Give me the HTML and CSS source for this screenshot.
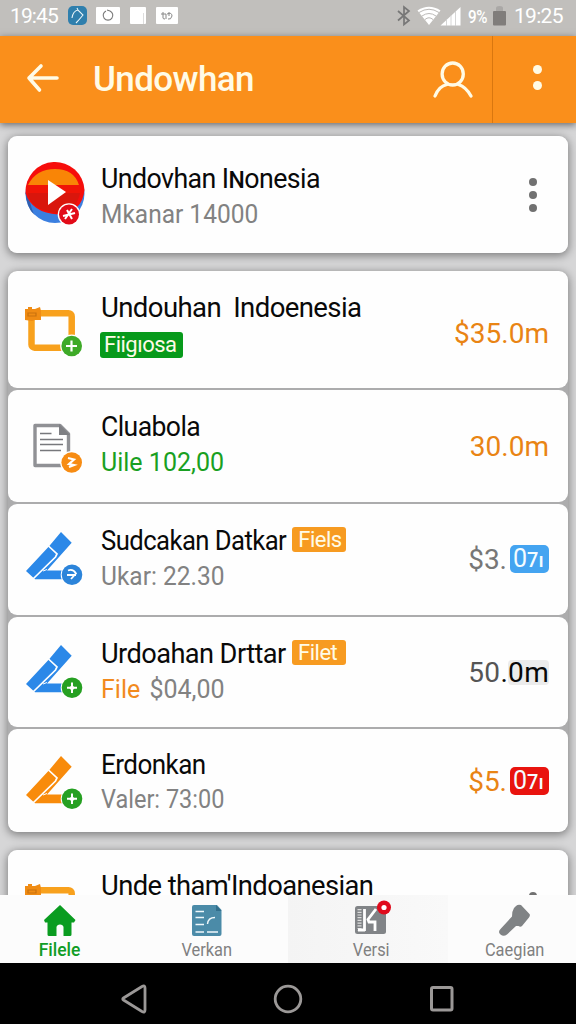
FILE: index.html
```html
<!DOCTYPE html>
<html lang="id">
<head>
<meta charset="utf-8">
<title>Undowhan</title>
<link rel="stylesheet" href="styles.css">
</head>
<body>
<svg class="defs" aria-hidden="true">
  <symbol id="pen" viewBox="0 0 62 60">
    <path d="M37 3 47.700 13.700 23 41.500H40V50.300H11L2 42 25.300 17Z" fill="currentColor"/>
    <path d="M24.500 17 33 25 31.500 28 9 50" fill="none" stroke="#fff" stroke-width="1.700"/>
    <path d="M23 40.500 19 42" fill="none" stroke="#fff" stroke-width="1"/>
  </symbol>
  <symbol id="clip" viewBox="0 0 62 60">
    <path d="M7.500 12.200H44.500a3.200 3.200 0 0 1 3.200 3.200V46.700H10.500a3 3 0 0 1-3-3Z" fill="none" stroke="#f8a11d" stroke-width="6.500"/>
    <path d="M1 8H4V6H8V8H11L16 6 17 10V19H11L8 20 1 19Z" fill="#f08c14"/>
    <path d="M4 12H12V15H4Z" fill="none" stroke="#c9720e" stroke-width="1.200"/>
  </symbol>
</svg>
<div class="screen">
  <header class="status">
    <span class="clock">19:45</span>
    <svg class="status-apps" width="120" height="20" viewBox="0 0 120 20">
      <rect x="0" y="0" width="19" height="19" rx="5" fill="#2f7fad"/>
      <path d="M4 12Q5 5 10 4L15 9Q11 14 8 17M10 4 9 2" fill="none" stroke="#e9f5fa" stroke-width="1.1"/>
      <rect x="28" y="1" width="24" height="17" rx="1" fill="#fff"/>
      <path d="M38 5a4.800 4.800 0 1 0 4 0L39 4" fill="none" stroke="#777" stroke-width="1.1"/>
      <rect x="62" y="1" width="16" height="17" rx="1" fill="#fff"/>
      <path d="M75.500 7V18" stroke="#ddd"/>
      <rect x="88" y="1" width="22" height="17" rx="1" fill="#fff"/>
      <path d="M93 8h5M95 6v6q0 1 2 1M98 8v5M99 8q5-2 5 2-1 4-4 3M101 6v4" fill="none" stroke="#888" stroke-width="1"/>
    </svg>
    <svg class="status-signal" width="64" height="22" viewBox="0 0 64 22">
      <path d="M1 6 12 15.500 7 19.500V2L12 6 1 15.500" fill="none" stroke="#777" stroke-width="1.7"/>
      <path d="M32 20 20.500 5.500Q32-2 43.500 5.500Z" fill="#fff"/>
      <path d="M22 7.500Q32 1 42 7.500M25 11Q32 6 39 11M28 14.500Q32 11 36 14.500" fill="none" stroke="#bbb9b7" stroke-width="1"/>
      <path d="M43.500 20.500 63.500 2V20.500Z" fill="#fff"/>
      <path d="M49.500 14V21M54 10V21M58.500 6V21" stroke="#ccc" stroke-width=".8"/>
    </svg>
    <span class="percent">9%</span>
    <svg class="battery" width="13" height="20" viewBox="0 0 13 20"><path d="M3 5V2Q3 0 6.500 0T10 2V5Z" fill="#aaa8a6"/><rect y="5" width="13" height="14.500" rx="1" fill="#807d7b"/></svg>
    <span class="clock">19:25</span>
  </header>

  <div class="appbar">
    <svg class="back" width="34" height="30" viewBox="0 0 34 30"><path d="M15 3 3 15 13.500 27M3 15H31" fill="none" stroke="#fffbe6" stroke-width="3.600" stroke-linecap="round" stroke-linejoin="round"/></svg>
    <h1>Undowhan</h1>
    <svg class="user" width="42" height="40" viewBox="0 0 42 40"><g fill="none" stroke="#fffbe6" stroke-width="3.300" stroke-linecap="round"><ellipse cx="20.700" cy="14" rx="10.600" ry="11"/><path d="M3 36Q7 26 15 24.500M26.500 24.500Q34 27 39 36"/></g></svg>
    <div class="more-bar"><i></i><i></i></div>
  </div>

  <main>
    <section class="card">
      <article class="row first">
        <svg class="icon" width="62" height="68" viewBox="0 0 62 68">
          <circle cx="31" cy="33.500" r="29.500" fill="#3b7fe0"/>
          <path d="M1.500 33Q3 48 10 54.500 4 40 5 30Z" fill="#315fae"/>
          <path d="M1.500 33A29.500 29.500 0 0 1 60.500 30Q58 53 34 54.500 8 53 1.500 33Z" fill="#f60d0b"/>
          <path d="M4 25H57Q56 52 32 53 5 50 3 30Z" fill="#d9160c"/>
          <path d="M4 25Q12 9 31 9T55 25Z" fill="#f98506"/>
          <path d="M3 25H57V33H3Z" fill="#f01407"/>
          <path d="M24 20 42 32 24 45Z" fill="#fff"/>
          <circle cx="45" cy="54.500" r="11.300" fill="#fff"/><circle cx="45" cy="54.500" r="10" fill="#e20b18"/>
          <path d="M39 56 51 53M43 50 48 59M48 49 41 59" stroke="#fff" stroke-width="2"/>
        </svg>
        <div class="text"><h2><span class="t1">Undovhan I<small>N</small>onesia</span></h2><p><span class="s1">Mkanar 14000</span></p></div>
        <div class="more"><i></i><i></i><i></i></div>
      </article>
    </section>

    <section class="card group">
      <article class="row r2">
        <svg class="icon" width="62" height="60" viewBox="0 0 62 60"><use href="#clip"/><circle cx="47.700" cy="45" r="11.500" fill="#fff"/><circle cx="47.700" cy="45" r="10.300" fill="#3eaa28"/><path d="M47.500 39.500V50.500M42 45H53" stroke="#fff" stroke-width="2.200"/></svg>
        <div class="text"><h2><span class="t2">Undouhan Indoenesia</span></h2><div class="tag green">Fiigıosa</div></div>
        <div class="price orange">$35.0m</div>
      </article>
      <article class="row r3">
        <svg class="icon" width="62" height="60" viewBox="0 0 62 60"><path d="M11 10.500H36L44.500 19V50.500H11Z" fill="#fff" stroke="#909195" stroke-width="3.400" stroke-linejoin="round"/><path d="M35 9 46 20H35Z" fill="#7f8084"/><path d="M16 18.500H27.500M16 24.500H39M16 29.500H39M16 35.500H37" stroke="#77787c" stroke-width="1.500"/><circle cx="47.700" cy="47.500" r="11.500" fill="#fff"/><circle cx="47.700" cy="47.500" r="10.300" fill="#f78c13"/><path d="M44 43 50 44.500 45 49 50 50 45 52" fill="none" stroke="#fff" stroke-width="2.200"/></svg>
        <div class="text"><h2><span class="t3">Cluabola</span></h2><p class="leaf"><span class="s3">Uile 102,00</span></p></div>
        <div class="price orange">30.0m</div>
      </article>
      <article class="row r4">
        <svg class="icon blue" width="62" height="60" viewBox="0 0 62 60"><use href="#pen"/><circle cx="48" cy="45.700" r="11.300" fill="#fff"/><circle cx="48" cy="45.700" r="10.300" fill="#2c84da"/><path d="M44 41.500Q49 39.500 52 44.500L47 50M43 46H52" fill="none" stroke="#fff" stroke-width="1.800"/></svg>
        <div class="text"><h2><span class="t4">Sudcakan Datkar</span><span class="tag amber">Fiels</span></h2><p><span class="s4">Ukar: 22.30</span></p></div>
        <div class="price grey">$3.<b class="chip sky">0<small>7ı</small></b></div>
      </article>
      <article class="row r5">
        <svg class="icon blue" width="62" height="60" viewBox="0 0 62 60"><use href="#pen"/><circle cx="48" cy="45.700" r="11.300" fill="#fff"/><circle cx="48" cy="45.700" r="10.300" fill="#26a022"/><path d="M48 40.500V51M43 45.700H53" stroke="#fff" stroke-width="2"/><path d="M48 43 51 45.700 48 49 45 45.700Z" fill="#fff"/></svg>
        <div class="text"><h2><span class="t5">Urdoahan Drttar</span><span class="tag amber">Filet</span></h2><p><span class="s5"><em>File</em> $04,00</span></p></div>
        <div class="price dark">50<b class="hl">.<span>0m</span></b></div>
      </article>
      <article class="row r6">
        <svg class="icon tangerine" width="62" height="60" viewBox="0 0 62 60"><use href="#pen"/><circle cx="48" cy="45.700" r="11.300" fill="#fff"/><circle cx="48" cy="45.700" r="10.300" fill="#26a022"/><path d="M48 40.500V51M43 45.700H53" stroke="#fff" stroke-width="2"/><path d="M48 43 51 45.700 48 49 45 45.700Z" fill="#fff"/></svg>
        <div class="text"><h2><span class="t6">Erdonkan</span></h2><p><span class="s6">Valer: 73:00</span></p></div>
        <div class="price orange">$5.<b class="chip red">0<small>7ı</small></b></div>
      </article>
    </section>

    <section class="card">
      <article class="row r7">
        <svg class="icon" width="62" height="60" viewBox="0 0 62 60"><use href="#clip"/></svg>
        <div class="text"><h2><span class="t7">Unde tham'Indoanesian</span></h2></div>
        <div class="more"><i></i><i></i><i></i></div>
      </article>
    </section>
  </main>

  <nav class="tabs">
    <a class="active"><svg width="34" height="34" viewBox="0 0 34 34"><path d="M17 1 32.500 16 31 18.500H28.500V30.500Q28.500 32 27 32H20.500V23Q20 20.500 17 20.500T13.500 23V32H6Q4.500 32 4.500 30.500V18.500H2L1 16Z" fill="#0a9c20"/></svg><span>Filele</span></a>
    <a><svg width="34" height="34" viewBox="0 0 34 34"><path d="M4 1H27L31.500 6V30a2 2 0 0 1-2 2H4a2 2 0 0 1-2-2V3a2 2 0 0 1 2-2Z" fill="#4b8ba8"/><path d="M26 1 31.500 7H26Z" fill="#326f8c"/><path d="M5.500 7.500H14M5.500 13.500H14M5.500 20.500H14M5.500 28H14M17 28H28" stroke="#eff8fb" stroke-width="1.700"/><path d="M17.500 20Q18 13.500 25 13.500" fill="none" stroke="#eff8fb" stroke-width="1.400"/></svg><span>Verkan</span></a>
    <a class="shade"><svg width="40" height="36" viewBox="0 0 40 36"><rect x="4" y="6" width="31" height="28" rx="2.500" fill="#818487"/><path d="M8.500 9V31" stroke="#ddd" stroke-width="4" stroke-dasharray="1.200 1.500"/><path d="M13.500 9V31M7 30H14M25 9 17 19.500 18 22H24V31" fill="none" stroke="#fff" stroke-width="2.800"/><circle cx="33" cy="7.500" r="7" fill="#e00b1c"/><circle cx="33" cy="7.500" r="2.600" fill="#fff"/></svg><span>Versi</span></a>
    <a class="last"><svg width="34" height="34" viewBox="0 0 34 34"><path d="M18 2Q20 0 23 1L31.500 10Q32.500 11.500 31 13.500L24 22Q22.500 23.500 20.500 22L18 22 9 30.500Q5.500 33 2.500 30.500T2.500 25L14 12.500Q14 7 16 4Z" fill="#808385"/></svg><span>Caegian</span></a>
  </nav>

  <footer class="system">
    <svg width="26" height="30" viewBox="0 0 26 30"><path d="M21 2.500Q24 1 24 4V26Q24 29 21 27.500L2.500 16Q1 15 2.500 14Z" fill="none" stroke="#9b9897" stroke-width="2.800"/></svg>
    <svg width="30" height="30" viewBox="0 0 30 30"><circle cx="15" cy="15" r="12.800" fill="none" stroke="#9b9897" stroke-width="2.800"/></svg>
    <svg width="26" height="28" viewBox="0 0 26 28"><rect x="2.500" y="2.500" width="20.500" height="22.500" rx="1.500" fill="none" stroke="#9b9897" stroke-width="3"/></svg>
  </footer>
</div>
</body>
</html>
```
FILE: styles.css
```css
* { box-sizing: border-box; }
body { margin: 0; font-family: Roboto, "Liberation Sans", sans-serif; color: #090909; background: #d6d6d7; }
h1, h2, p { margin: 0; font-weight: 400; white-space: nowrap; }
svg { display: block; flex: none; }
.defs { display: none; }
.screen { height: 1024px; width: 576px; display: flex; flex-direction: column; overflow: hidden; }

.status { height: 36px; flex: none; display: flex; align-items: center; padding: 0 13px 4px 10px; background: #c1bfbc; color: #fff; }
.clock { font-size: 21px; letter-spacing: -.9px; width: 47px; white-space: nowrap; }
.status-apps { margin-left: 11px; }
.status-signal { margin-left: auto; }
.percent { font-size: 19px; letter-spacing: -.6px; transform: scaleX(.8); transform-origin: left; font-weight: 500; margin-left: 7px; width: 23px; white-space: nowrap; }
.battery { margin: 0 8px 0 2px; }
.battery + .clock { width: 49px; letter-spacing: -.7px; }

.appbar { height: 87px; flex: none; display: flex; align-items: center; background: #fa8f1b; padding-left: 26px; box-shadow: 0 2px 7px rgba(0,0,0,.5); color: #fffbe6; z-index: 1; }
.appbar h1 { font-size: 35px; font-weight: 500; letter-spacing: -.6px; margin-left: 33px; padding-bottom: 1px; }
.back { margin-bottom: 3px; }
.user { margin-left: auto; margin-right: 18px; }
.more-bar { width: 84px; height: 87px; border-left: 1px solid #d9770f; display: flex; flex-direction: column; align-items: center; justify-content: center; gap: 7px; padding: 0 0 4px 5px; }
.more-bar i { width: 9px; height: 9px; border-radius: 50%; background: #fffbe6; }

main { height: 772px; flex: none; overflow: hidden; padding: 13px 8px 0; display: flex; flex-direction: column; gap: 17.500px; }
.card { flex: none; border-radius: 9px; box-shadow: 0 2px 9px 1px rgba(0,0,0,.4); }
.group { display: flex; flex-direction: column; gap: 2px; background: #acacad; }
.row { display: flex; background: #fefefe; border-radius: 9px; padding-left: 16px; padding-right: 19px; }
.first { height: 117px; }
.r2 { height: 117px; }
.r3 { height: 112.500px; }
.r4 { height: 111px; }
.r5 { height: 110px; }
.r6 { height: 103px; }
.r7 { height: 117px; }
.icon { margin-top: 25px; }
.first .icon { margin-top: 24px; }
.r2 .icon { margin-top: 30px; }
.r6 .icon { margin-top: 24px; }
.r7 .icon { margin-top: 28px; }
.blue { color: #2b88e8; }
.tangerine { color: #f88b0b; }
.text { flex: 1; margin-left: 14px; padding-top: 19px; }
.first .text { padding-top: 25px; }
.r6 .text { padding-top: 18px; }
.r7 .text { padding-top: 18px; }
h2 { font-size: 28px; line-height: 36px; letter-spacing: -.6px; display: flex; align-items: center; }
h2 small { font-size: 24px; font-weight: 500; }
p { font-size: 25px; line-height: 36px; color: #828282; }
.first p { margin-top: -1px; }
.r6 p { margin-top: -1px; }

/* each line is condensed slightly from its left edge */
.text span { display: inline-block; transform-origin: left; }
h2 > span:first-child, p > span { margin-left: 1px; }
.t1 { transform: scaleX(.956); }
.t2 { word-spacing: 6px; transform: scaleX(.983); }
.t3 { transform: scaleX(.948); }
.t4 { transform: scaleX(.916); margin-right: -18px; }
.t5 { transform: scaleX(.972); margin-right: -6px; }
.t6 { transform: scaleX(.93); }
.t7 { transform: scaleX(.977); }
.s1 { transform: scaleX(.98); }
.s4 { transform: scaleX(.98); }
.s5 { word-spacing: 3px; }
.s6 { transform: scaleX(.94); }
.leaf { color: #19a022; }
p em { font-style: normal; color: #f28a1d; }
.tag { border-radius: 3px; color: #fffbe8; font-size: 22px; line-height: 26px; height: 26px; padding: 0 4px; letter-spacing: -.5px; white-space: nowrap; }
.green { width: 83px; margin-top: 6px; background: #079a1b; }
.amber { width: 54px; height: 25px; line-height: 25px; background: #f79b21; margin-left: 7px; margin-top: -3px; padding: 0 6px; }

.price { align-self: center; font-size: 28px; line-height: 36px; white-space: nowrap; display: flex; align-items: center; padding-top: 2px; }
.r2 .price { padding-top: 10px; }
.r4 .price { padding-top: 0; }
.orange { color: #e98414; }
.grey { color: #777; }
.dark { color: #555; letter-spacing: .3px; }
.chip { font-weight: 400; color: #f5fcff; font-size: 25px; width: 39px; height: 28px; line-height: 28px; border-radius: 5px; padding-left: 3px; display: flex; align-items: baseline; margin-left: 3px; margin-top: -1px; }
.chip small { font-size: 20px; font-weight: 500; }
.sky { background: #44a4f1; }
.red { background: #e9140f; }
.hl { font-weight: 400; color: #080808; display: flex; }
.hl span { background: #ececec; border-radius: 4px; height: 25px; line-height: 25px; margin-top: 5px; }
.more { display: flex; flex-direction: column; gap: 5px; margin: 42px 12px 0 0; }
.more i { width: 8px; height: 8px; border-radius: 50%; background: #717171; }

.tabs { height: 68px; flex: none; display: grid; grid-template-columns: 120px 168px 160px 128px; background: #fcfcfc; z-index: 1; color: #808080; }
.tabs a { display: flex; flex-direction: column; align-items: center; padding-top: 9px; font-size: 18px; line-height: 22px; white-space: nowrap; }
.tabs a:nth-child(2) { padding-left: 6px; }
.tabs svg { height: 34px; }
.tabs a span { margin-top: 1px; transform: scaleX(.91); }
.tabs .active { color: #109d25; font-weight: 500; padding-right: 1px; }
.tabs .active span { transform: scaleX(.97); }
.tabs .shade { background: linear-gradient(90deg, #f4f4f4, #f9f9f9); padding: 5px 0 0 6px; }
.tabs .shade svg { height: 36px; }
.tabs .shade span { margin-top: 3px; }
.tabs .last { padding-left: 6px; }

.system { height: 61px; flex: none; background: #000; display: flex; align-items: center; justify-content: space-between; padding: 10px 121px 0 121px; }
```
